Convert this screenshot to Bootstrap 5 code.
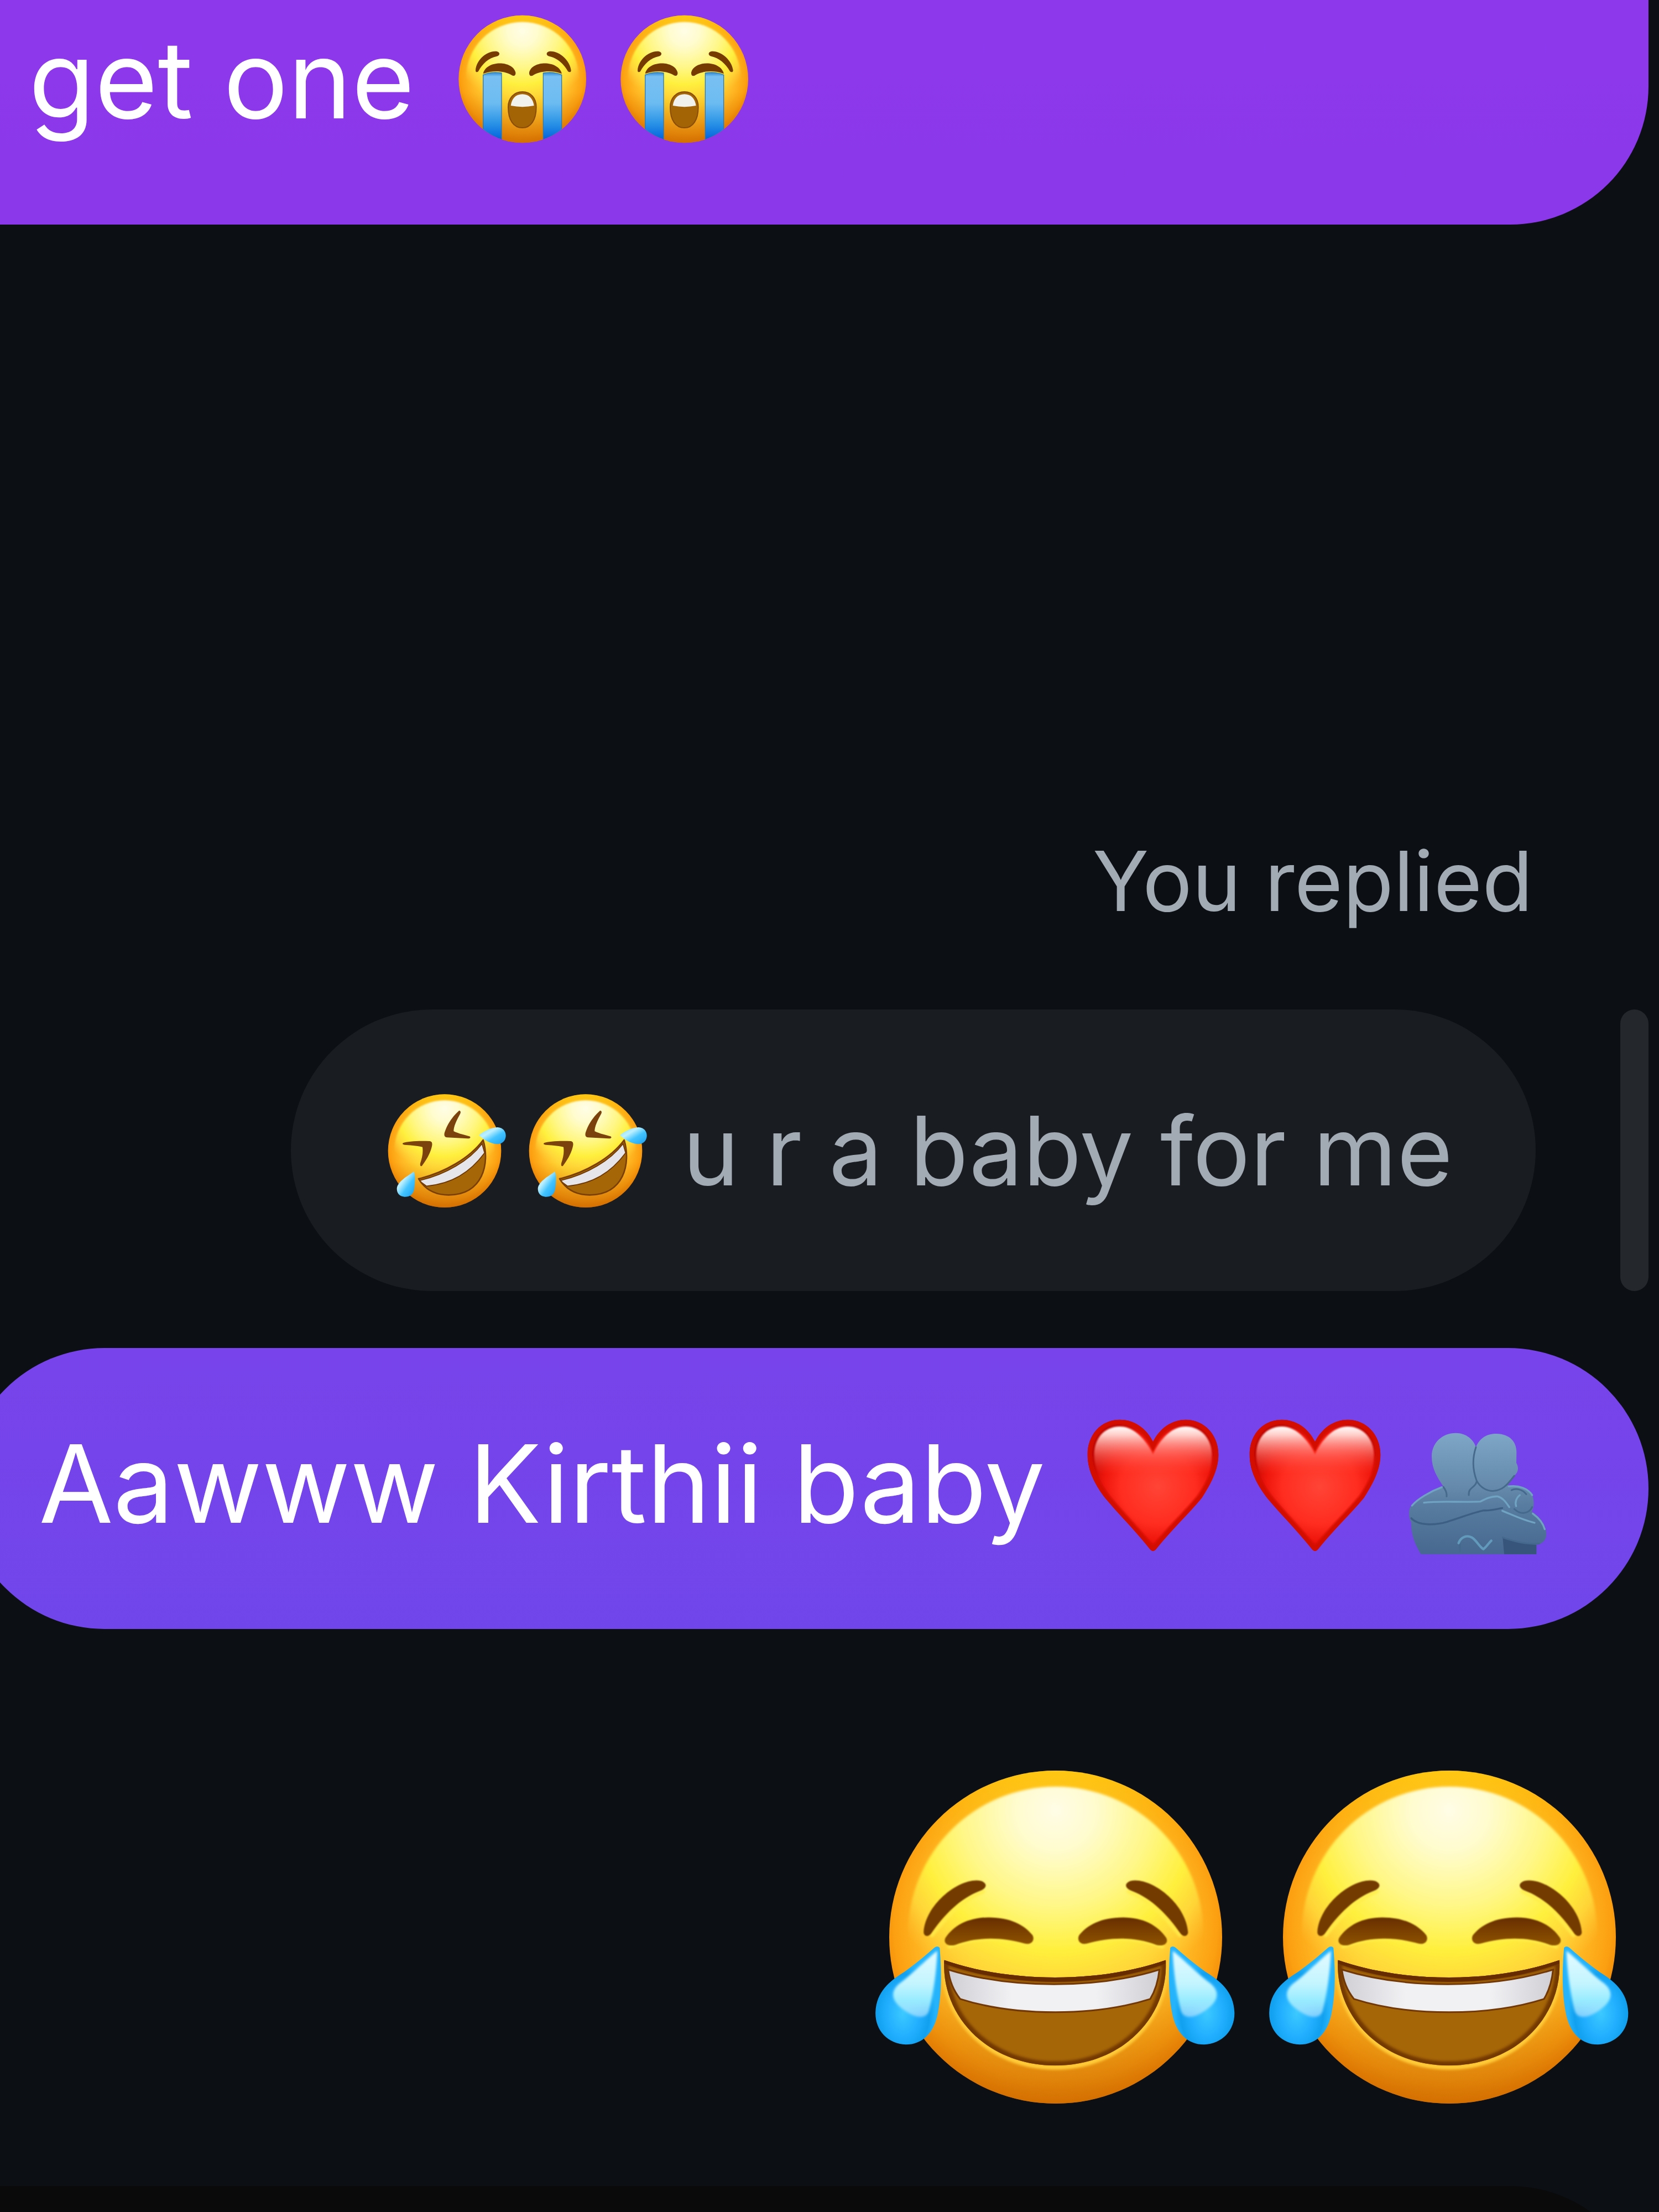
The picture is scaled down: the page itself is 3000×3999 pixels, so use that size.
<!DOCTYPE html>
<html lang="en">
<head>
<meta charset="utf-8">
<meta name="viewport" content="width=device-width, initial-scale=1">
<title>Chat</title>
<link href="https://cdn.jsdelivr.net/npm/bootstrap@5.3.0/dist/css/bootstrap.min.css" rel="stylesheet">
<style>
  body { background: #0c1014; font-family: Inter, "Liberation Sans", sans-serif; color: #fff; }
  .chat { min-height: 100vh; padding-right: 19px; overflow: hidden; }
  .bubble { font-size: 195px; line-height: 240px; padding: 125px 164px 143px 135px; border-radius: 255px; gap: 48px; white-space: nowrap; }
  .bubble-first { padding: 23px 52px 143px; border-radius: 0 0 250px 0; background: linear-gradient(#8e38ec, #8a38e9); }
  .bubble-sent { background: linear-gradient(#7843ea, #7046ea); margin-top: 103px; }
  .bubble-quote { font-size: 173px; line-height: 210px; padding: 150px 150px 149px; background: #191c21; color: #a2aab4; }
  .reply-label { font-size: 150px; line-height: 180px; color: #a2aab4; margin: 1097px 209px 142px 0; }
  .quote-row { gap: 153px; }
  .quote-bar { width: 51px; background: #24272b; }
  .emoji { width: 293px; height: 293px; margin: -27px 0; }
  .emoji-sm { width: 255px; height: 255px; margin: -23px 0; }
  .emoji-lg { width: 712px; height: 712px; }
  .big-row { margin: 201px 4px 94px 0; }
  .next-bubble { height: 47px; overflow: hidden; }
  .next-bubble > div { height: 500px; background: #0a0a0a; border-radius: 0 250px 250px 0; }
</style>
</head>
<body>
<svg width="0" height="0" class="position-absolute" aria-hidden="true">
  <defs>
    <radialGradient id="base" cx=".5" cy=".46" r=".55">
      <stop offset="0" stop-color="#ffe22e"/><stop offset=".5" stop-color="#ffd531"/><stop offset=".72" stop-color="#ffb924"/><stop offset=".88" stop-color="#fca011"/><stop offset="1" stop-color="#ee7e00"/>
    </radialGradient>
    <linearGradient id="shade" x1="0" y1="0" x2="0" y2="1">
      <stop offset="0" stop-color="#ffdd10" stop-opacity=".6"/><stop offset=".25" stop-color="#ffb400" stop-opacity="0"/><stop offset=".6" stop-color="#d07000" stop-opacity="0"/><stop offset="1" stop-color="#c46400" stop-opacity=".65"/>
    </linearGradient>
    <radialGradient id="shine" cx=".5" cy=".08" r=".66">
      <stop offset="0" stop-color="#fffde6"/><stop offset=".2" stop-color="#fffccf"/><stop offset=".5" stop-color="#fff784"/><stop offset=".72" stop-color="#fff03d"/><stop offset=".86" stop-color="#ffdc3c" stop-opacity=".8"/><stop offset="1" stop-color="#ffcb38" stop-opacity="0"/>
    </radialGradient>
    <linearGradient id="brown" x1="0" y1="0" x2="0" y2="1"><stop offset="0" stop-color="#672e00"/><stop offset="1" stop-color="#8f5406"/></linearGradient>
    <linearGradient id="teeth" x1="0" y1="0" x2="1" y2="0"><stop offset="0" stop-color="#cfcfd4"/><stop offset=".3" stop-color="#f1f1f4"/><stop offset=".7" stop-color="#f1f1f4"/><stop offset="1" stop-color="#cfcfd4"/></linearGradient>
    <linearGradient id="stream" x1="0" y1="0" x2="0" y2="1"><stop offset="0" stop-color="#2c86d3"/><stop offset=".06" stop-color="#79c0f3"/><stop offset=".45" stop-color="#6cbcf1"/><stop offset=".75" stop-color="#2a93e6"/><stop offset="1" stop-color="#0060dc"/></linearGradient>
    <radialGradient id="drop" cx=".42" cy=".68" r=".5"><stop offset="0" stop-color="#3cc9ff"/><stop offset=".5" stop-color="#21aeff"/><stop offset=".8" stop-color="#10a0ef"/><stop offset="1" stop-color="#25b4fb"/></radialGradient>
    <linearGradient id="dropin" x1="0" y1="0" x2="0" y2="1"><stop offset="0" stop-color="#e4fbff"/><stop offset=".5" stop-color="#c3f5ff"/><stop offset=".75" stop-color="#98ecff"/><stop offset="1" stop-color="#bfe6ff" stop-opacity=".6"/></linearGradient>
    <linearGradient id="dropsm" x1="0" y1="0" x2="1" y2="1"><stop offset="0" stop-color="#7ad8f8"/><stop offset=".35" stop-color="#bdf0ff"/><stop offset=".6" stop-color="#43c4ff"/><stop offset="1" stop-color="#1a9df0"/></linearGradient>
    <filter id="soft1" x="-20%" y="-20%" width="140%" height="140%"><feGaussianBlur stdDeviation="2"/></filter>
    <filter id="soft2" x="-20%" y="-20%" width="140%" height="140%"><feGaussianBlur stdDeviation="5"/></filter>
    <filter id="soft3" x="-30%" y="-30%" width="160%" height="160%"><feGaussianBlur stdDeviation="16"/></filter>
    <clipPath id="cryclip"><circle cx="443" cy="428" r="346"/></clipPath>
    <clipPath id="mouthclip"><path d="M330 885 C600 985 960 985 1228 885 C1240 1130 1050 1338 780 1338 C510 1338 318 1130 330 885Z"/></clipPath>
    <clipPath id="roflmouth"><path d="M222 512 C360 480 500 400 572 302 C610 430 570 600 385 600 C300 600 250 560 222 512Z"/></clipPath>
    <radialGradient id="heart" gradientUnits="userSpaceOnUse" cx="460" cy="440" r="400"><stop offset="0" stop-color="#ff4436"/><stop offset=".5" stop-color="#ff2d20"/><stop offset=".72" stop-color="#f0170d"/><stop offset="1" stop-color="#b80500"/></radialGradient>
    <linearGradient id="heartshine" gradientUnits="userSpaceOnUse" x1="0" y1="110" x2="0" y2="370"><stop offset="0" stop-color="#fff"/><stop offset=".18" stop-color="#ffd0cb"/><stop offset=".5" stop-color="#ff8078" stop-opacity=".75"/><stop offset="1" stop-color="#ff4035" stop-opacity="0"/></linearGradient>
    <clipPath id="heartclip"><path id="heartpath" d="M435 195 C400 125 335 76 255 76 C150 76 80 160 80 265 C80 360 130 440 175 500 C250 590 350 690 420 780 Q435 797 450 780 C520 690 625 590 700 500 C745 430 790 350 790 265 C790 160 715 76 612 76 C535 76 470 125 435 195Z"/></clipPath>
    <linearGradient id="hug" gradientUnits="userSpaceOnUse" x1="0" y1="90" x2="0" y2="745"><stop offset="0" stop-color="#7ea6c7"/><stop offset=".45" stop-color="#6489aa"/><stop offset=".6" stop-color="#577c9f"/><stop offset="1" stop-color="#476890"/></linearGradient>

    <symbol id="cry" viewBox="3 -10 879 879">
      <circle cx="443" cy="428" r="346" fill="url(#base)"/><circle cx="443" cy="428" r="346" fill="url(#shade)"/>
      <circle cx="443" cy="424" r="306" fill="url(#shine)" filter="url(#soft2)"/>
      <g clip-path="url(#cryclip)">
        <path d="M230 405 Q280 385 330 395 V760 H230Z M556 395 Q610 385 656 405 V760 H556Z" fill="url(#stream)" stroke="#3378ac" stroke-width="4"/>
      </g>
      <g fill="#743a02" filter="url(#soft1)">
        <path d="M189 380 C193 325 250 272 305 278 C323 282 322 300 305 304 C260 312 225 345 204 386 C198 393 188 391 189 380Z"/>
        <path d="M707 380 C700 325 640 272 588 278 C570 282 571 300 588 304 C630 312 668 345 690 386 C697 393 708 391 707 380Z"/>
        <path d="M230 399 C245 325 390 325 406 392 C408 412 393 414 382 405 C340 382 280 380 230 399Z"/>
        <path d="M657 399 C640 325 495 325 480 392 C478 412 493 416 505 405 C545 382 610 380 657 399Z"/>
      </g>
      <path d="M443 497 C488 497 518 530 518 580 C518 650 488 692 443 692 C395 692 366 650 366 580 C366 530 398 497 443 497Z" fill="#a36406" stroke="#8a4d08" stroke-width="6"/>
      <path d="M380 572 C385 535 405 510 443 510 C480 510 500 535 506 572 Q443 585 380 572Z" fill="#f1f1ee" filter="url(#soft1)"/>
    </symbol>

    <symbol id="rofl" viewBox="-21 -22 765 765">
      <circle cx="363" cy="361" r="307" fill="url(#base)"/><circle cx="363" cy="361" r="307" fill="url(#shade)"/>
      <circle cx="363" cy="359" r="272" fill="url(#shine)" filter="url(#soft2)"/>
      <g fill="#7b430b" filter="url(#soft1)">
        <path d="M442 142 C452 144 452 154 444 166 C425 200 412 230 412 254 C440 268 475 275 498 282 C508 288 500 295 488 294 L375 288 C360 286 359 272 364 258 C378 215 405 175 442 142Z"/>
        <path d="M138 318 C160 308 230 305 282 308 C298 310 297 325 293 340 C283 380 260 415 240 442 C232 447 229 440 231 428 C242 395 247 370 243 340 C210 332 170 330 145 328 C133 326 133 322 138 318Z"/>
      </g>
      <g clip-path="url(#roflmouth)">
        <rect x="200" y="280" width="420" height="340" fill="#a56607"/>
        <path d="M224 522 C370 490 500 410 566 322 L580 372 C500 480 400 540 265 552Z" fill="#e5e5ea" stroke="#6c3504" stroke-width="5"/>
      </g>
      <path d="M222 512 C360 480 500 400 572 302 C610 430 570 600 385 600 C300 600 250 560 222 512Z" fill="none" stroke="#7a3f05" stroke-width="8" stroke-linejoin="round"/>
      <path d="M549 276 C580 250 615 235 650 233 C680 234 695 255 695 280 C693 308 675 324 645 324 C610 322 575 300 549 276Z" fill="url(#dropsm)"/>
      <path d="M196 474 C206 490 202 540 198 568 C193 598 172 611 145 610 C118 608 103 590 104 564 C110 525 160 500 196 474Z" fill="url(#dropsm)"/>
    </symbol>

    <symbol id="red-heart" viewBox="-6 -16 879 879">
      <use href="#heartpath" fill="url(#heart)"/>
      <g clip-path="url(#heartclip)">
        <path d="M80 300 C110 420 200 530 435 790 L240 760 L40 500Z" fill="#8f0500" opacity=".8" filter="url(#soft3)"/>
        <path d="M435 795 C520 690 640 590 710 490 L700 700 L435 830Z" fill="#a50600" opacity=".75" filter="url(#soft3)"/>
        <use href="#heartpath" fill="none" stroke="#d30d03" stroke-width="52" filter="url(#soft2)"/>
        <path d="M435 265 C395 180 330 113 255 113 C165 113 116 185 116 265 C116 330 140 375 170 410 H700 C735 375 754 330 754 265 C754 185 700 113 612 113 C535 113 475 180 435 265Z" fill="url(#heartshine)" filter="url(#soft2)"/>
      </g>
    </symbol>

    <symbol id="hugging" viewBox="12 -76 879 879">
      <path d="M148 745 C115 690 95 640 96 575 C82 550 80 510 92 488 C120 445 210 400 270 378 C235 325 207 280 207 215 C207 140 265 88 338 88 C395 88 435 125 447 165 C465 118 505 90 560 92 C630 94 668 135 667 195 L666 250 C680 275 678 300 655 320 L618 372 C690 370 760 400 760 460 C762 490 755 505 750 514 C800 545 832 595 828 645 C825 675 800 692 775 694 V745Z" fill="url(#hug)"/>
      <path d="M592 655 C650 675 710 690 775 694 V745 H600Z" fill="#37557b"/>
      <g fill="none" stroke-linecap="round" stroke-linejoin="round" filter="url(#soft1)">
        <path d="M447 165 C425 230 430 290 450 345 C470 385 510 405 545 402 C585 398 610 380 655 320 M450 352 C445 385 405 380 408 425 M270 380 C285 400 290 415 288 432" stroke="#456a8b" stroke-width="9"/>
        <path d="M96 550 C130 590 220 590 290 570 C370 545 430 520 490 508 C530 510 560 500 590 495" stroke="#3c5f84" stroke-width="10"/>
        <path d="M640 398 C665 385 700 395 720 420 M655 500 C690 535 735 525 752 490 M592 655 C650 675 720 695 790 688 M360 730 V690" stroke="#44678d" stroke-width="9"/>
        <path d="M165 466 C250 455 350 465 470 460 C500 445 530 430 565 432 C595 440 610 465 628 490 M590 510 C640 530 700 560 765 575 M100 482 C130 445 200 405 262 382 M755 525 C790 550 812 580 820 610 M685 425 C665 440 658 465 665 485 M625 378 C680 370 730 390 752 425" stroke="#6fa3c2" stroke-width="10"/>
        <path d="M353 685 C365 650 400 640 425 655 C450 670 465 705 487 718 C505 705 515 685 530 672" stroke="#629abb" stroke-width="13"/>
      </g>
    </symbol>

    <g id="bigdrop">
      <path d="M312 832 C320 930 320 1030 305 1110 C290 1200 240 1248 175 1248 C100 1245 50 1185 52 1110 C55 1020 110 975 170 935 C215 900 255 865 290 832 Q303 822 312 832Z" fill="url(#drop)"/>
      <path d="M302 845 C300 930 285 1040 268 1105 C255 1145 205 1130 165 1098 C115 1060 110 1020 150 985 C200 945 260 880 302 845Z" fill="url(#dropin)" filter="url(#soft2)"/>
    </g>
    <symbol id="joy" viewBox="0 0 712 712">
      <circle cx="356" cy="356" r="301" fill="url(#base)"/><circle cx="356" cy="356" r="301" fill="url(#shade)"/>
      <circle cx="356" cy="351" r="267" fill="url(#shine)" filter="url(#soft1)"/>
      <g transform="translate(7 25) scale(.4464 .4209)">
        <g id="eyeset">
          <g fill="none" stroke="#ffee4a" stroke-width="12" filter="url(#soft2)" stroke-linecap="round">
            <path d="M490 590 C400 630 340 700 280 780 M350 828 C450 785 580 785 680 822"/>
          </g>
          <path d="M247 765 C255 640 400 525 480 545 C508 556 502 578 475 588 C395 620 330 690 276 773 C264 788 247 782 247 765Z" fill="#733a03" filter="url(#soft1)"/>
          <path d="M335 790 C370 735 430 702 510 702 C600 702 655 735 688 778 C700 802 680 822 655 814 C560 785 460 785 375 820 C345 828 325 812 335 790Z" fill="url(#brown)" filter="url(#soft1)"/>
        </g>
        <use href="#eyeset" transform="translate(1565 0) scale(-1 1)"/>
        <path d="M330 890 C318 1130 510 1345 780 1345 C1050 1345 1240 1130 1228 890" fill="none" stroke="#ffca38" stroke-width="22" filter="url(#soft2)"/>
        <g clip-path="url(#mouthclip)">
          <rect x="300" y="870" width="960" height="480" fill="#a56607"/>
          <path d="M330 885 C600 985 960 985 1228 885 C1240 1130 1050 1338 780 1338 C510 1338 318 1130 330 885Z" fill="none" stroke="#6a3000" stroke-width="36" filter="url(#soft2)" opacity=".85"/>
          <path d="M330 870 V900 C600 1005 960 1005 1228 900 V870 C960 985 600 985 330 870Z" fill="#662c00"/>
          <path d="M346 926 C600 1010 950 1010 1202 926 Q1195 1000 1165 1052 C940 1128 620 1128 395 1052 Q355 1000 346 926Z" fill="url(#teeth)" stroke="#713806" stroke-width="7"/>
        </g>
        <use href="#bigdrop"/>
        <use href="#bigdrop" transform="translate(1558 0) scale(-1 1)"/>
      </g>
    </symbol>
  </defs>
</svg>

<main class="chat d-flex flex-column align-items-end">
  <div class="bubble bubble-first d-flex align-items-center align-self-stretch">
    <span>get one</span>
    <span class="d-flex"><svg class="emoji" role="img" aria-label="Loudly crying face"><use href="#cry"/></svg><svg class="emoji" role="img" aria-label="Loudly crying face"><use href="#cry"/></svg></span>
  </div>

  <div class="reply-label">You replied</div>

  <div class="quote-row d-flex align-items-stretch">
    <div class="bubble bubble-quote d-flex align-items-center">
      <span class="d-flex"><svg class="emoji-sm" role="img" aria-label="Rolling on the floor laughing"><use href="#rofl"/></svg><svg class="emoji-sm" role="img" aria-label="Rolling on the floor laughing"><use href="#rofl"/></svg></span>
      <span>u r a baby for me</span>
    </div>
    <div class="quote-bar rounded-pill"></div>
  </div>

  <div class="bubble bubble-sent d-flex align-items-center">
    <span>Aawww Kirthii baby</span>
    <span class="d-flex"><svg class="emoji" role="img" aria-label="Red heart"><use href="#red-heart"/></svg><svg class="emoji" role="img" aria-label="Red heart"><use href="#red-heart"/></svg><svg class="emoji" role="img" aria-label="People hugging"><use href="#hugging"/></svg></span>
  </div>

  <div class="big-row d-flex">
    <svg class="emoji-lg" role="img" aria-label="Face with tears of joy"><use href="#joy"/></svg>
    <svg class="emoji-lg" role="img" aria-label="Face with tears of joy"><use href="#joy"/></svg>
  </div>

  <div class="next-bubble align-self-stretch"><div></div></div>
</main>
<script src="https://cdn.jsdelivr.net/npm/bootstrap@5.3.0/dist/js/bootstrap.bundle.min.js"></script>
</body>
</html>
